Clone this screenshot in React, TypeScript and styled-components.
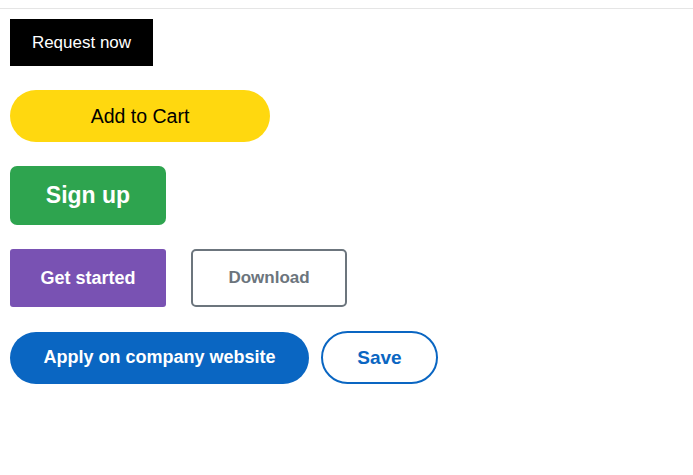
import React from 'react';
import styled, { createGlobalStyle, css } from 'styled-components';

const GlobalStyle = createGlobalStyle`
  body {
    margin: 0;
    background: #fff;
    font-family: 'Liberation Sans', Arial, sans-serif;
  }
`;

const Page = styled.div`
  margin-top: 8px;
  border-top: 1px solid #e5e5e5;
  padding: 10px;
  display: flex;
  flex-direction: column;
  align-items: flex-start;
  gap: 24px;
`;

const Row = styled.div<{ $gap: number }>`
  display: flex;
  align-items: center;
  gap: ${(p) => p.$gap}px;
`;

type Variant = 'request' | 'cart' | 'signup' | 'started' | 'download' | 'apply' | 'save';

const variants: Record<Variant, ReturnType<typeof css>> = {
  request: css`
    width: 143px;
    height: 47px;
    background: #000;
    color: #fff;
    font-size: 17px;
  `,
  cart: css`
    width: 260px;
    height: 52px;
    border-radius: 26px;
    background: #ffd80f;
    color: #000;
    font-size: 19.5px;
  `,
  signup: css`
    width: 156px;
    height: 59px;
    border-radius: 7px;
    background: #2ea44f;
    color: #fff;
    font-size: 23px;
    font-weight: 700;
  `,
  started: css`
    width: 156px;
    height: 58px;
    border-radius: 3px;
    background: #7952b3;
    color: #fff;
    font-size: 18px;
    font-weight: 700;
  `,
  download: css`
    width: 156px;
    height: 58px;
    border-radius: 5px;
    border: 2px solid #6c757d;
    background: #fff;
    color: #6c757d;
    font-size: 17px;
    font-weight: 700;
  `,
  apply: css`
    width: 299px;
    height: 52px;
    border-radius: 26px;
    background: #0a66c2;
    color: #fff;
    font-size: 18px;
    font-weight: 700;
  `,
  save: css`
    width: 117px;
    height: 53px;
    border-radius: 27px;
    border: 2px solid #0a66c2;
    background: #fff;
    color: #0a66c2;
    font-size: 19px;
    font-weight: 700;
  `,
};

const Button = styled.button<{ $variant: Variant }>`
  display: flex;
  align-items: center;
  justify-content: center;
  box-sizing: border-box;
  border: none;
  padding: 0;
  font-family: 'Liberation Sans', Arial, sans-serif;
  cursor: pointer;
  ${(p) => variants[p.$variant]}
`;

function App() {
  return (
    <>
      <GlobalStyle />
      <Page>
        <Button $variant="request">Request now</Button>
        <Button $variant="cart">Add to Cart</Button>
        <Button $variant="signup">Sign up</Button>
        <Row $gap={25}>
          <Button $variant="started">Get started</Button>
          <Button $variant="download">Download</Button>
        </Row>
        <Row $gap={12}>
          <Button $variant="apply">Apply on company website</Button>
          <Button $variant="save">Save</Button>
        </Row>
      </Page>
    </>
  );
}

export default App;
